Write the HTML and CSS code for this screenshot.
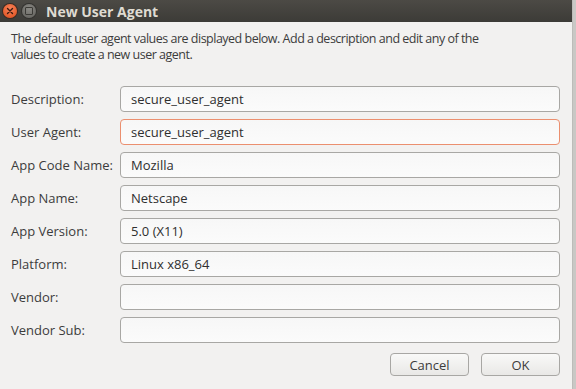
FILE: index.html
```html
<!DOCTYPE html>
<html lang="en">
<head>
    <meta charset="UTF-8">
    <title>New User Agent</title>
    <link rel="stylesheet" href="styles.css">
</head>
<body>
    <div class="window">
        <!-- Title bar -->
        <div class="titlebar">
            <span class="tb-btn tb-close">
                <svg width="8" height="8" viewBox="0 0 8 8"><path d="M1.5 1.5 L6.5 6.5 M6.5 1.5 L1.5 6.5" stroke="#3a1a10" stroke-width="1.4" stroke-linecap="round"/></svg>
            </span>
            <span class="tb-btn tb-min"><span class="tb-square"></span></span>
            <span class="tb-title">New User Agent</span>
        </div>

        <div class="content">
            <p class="intro">The default user agent values are displayed below. Add a description and edit any of the values to create a new user agent.</p>

            <div class="form">
                <label>Description:</label>
                <input type="text" value="secure_user_agent">
                <label>User Agent:</label>
                <input type="text" class="focused" value="secure_user_agent">
                <label>App Code Name:</label>
                <input type="text" value="Mozilla">
                <label>App Name:</label>
                <input type="text" value="Netscape">
                <label>App Version:</label>
                <input type="text" value="5.0 (X11)">
                <label>Platform:</label>
                <input type="text" value="Linux x86_64">
                <label>Vendor:</label>
                <input type="text" value="">
                <label>Vendor Sub:</label>
                <input type="text" value="">
            </div>

            <div class="buttons">
                <button>Cancel</button>
                <button>OK</button>
            </div>
        </div>
    </div>
</body>
</html>
```

FILE: styles.css
```css
body {
    margin: 0;
    background: #c9c8c5;
    font-family: "Open Sans", "DejaVu Sans", sans-serif;
    font-size: 13px;
    color: #3c3c3c;
}

.window {
    width: 572px;
    height: 389px;
    background: #f2f1f0;
    border-right: 1px solid #bdbcb9;
    overflow: hidden;
}

.titlebar {
    height: 22px;
    background: linear-gradient(#4c4a45, #3c3b37);
    display: flex;
    align-items: center;
    padding-left: 3px;
}

.tb-btn {
    width: 14px;
    height: 14px;
    border-radius: 50%;
    display: flex;
    align-items: center;
    justify-content: center;
    margin-right: 5px;
}

.tb-close {
    background: radial-gradient(circle at 50% 35%, #f6845c, #df4a16);
    box-shadow: 0 0 0 1px #3a2a22;
}

.tb-min {
    background: radial-gradient(circle at 50% 35%, #8a8984, #5f5e5a);
    box-shadow: 0 0 0 1px #33322f;
}

.tb-square {
    width: 6px;
    height: 6px;
    border: 1px solid #3c3b37;
    border-radius: 1px;
}

.tb-title {
    margin-left: 5px;
    color: #dfdbd2;
    font-weight: bold;
    font-size: 14px;
}

.content {
    padding: 9px 12px 0 11px;
}

.intro {
    margin: 0;
    line-height: 16px;
    width: 500px;
    font-size: 12.5px;
    letter-spacing: -0.5px;
}

.form {
    margin-top: 23px;
    display: grid;
    grid-template-columns: 109px 1fr;
    row-gap: 7px;
    align-items: center;
}

.form label {
    color: #3c3c3c;
}

.form input {
    height: 26px;
    box-sizing: border-box;
    border: 1px solid #a8a7a4;
    border-radius: 4px;
    background: linear-gradient(#f7f7f7, #fbfbfb);
    padding: 0 10px;
    font-family: inherit;
    font-size: 13px;
    color: #2f2f2f;
    outline: none;
}

.form input.focused {
    border-color: #eb8f6f;
}

.buttons {
    margin-top: 10px;
    display: flex;
    justify-content: flex-end;
    gap: 12px;
}

.buttons button {
    width: 79px;
    height: 23px;
    border: 1px solid #a8a7a4;
    border-radius: 4px;
    background: linear-gradient(#f9f9f8, #e9e8e6);
    font-family: inherit;
    font-size: 13px;
    color: #3c3c3c;
}
```
